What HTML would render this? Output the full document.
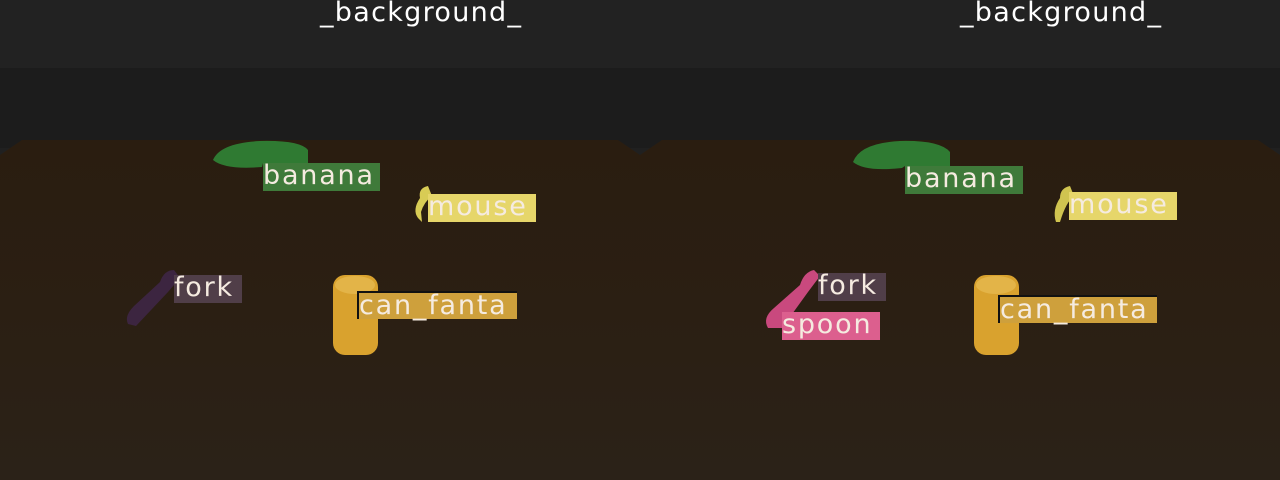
<!DOCTYPE html><html><head><style>
body{margin:0;width:1280px;height:480px;overflow:hidden;background:#202020;font-family:"DejaVu Sans","Liberation Sans",sans-serif}
.p{position:absolute;top:0;width:640px;height:480px;overflow:hidden}
.top{position:absolute;left:0;top:0;width:640px;height:68px;background:#222}
.mid{position:absolute;left:0;top:68px;width:640px;height:80px;background:#1c1c1c}
.floor{position:absolute;left:0;top:140px;width:640px;height:340px;background:linear-gradient(180deg,#2a1d10 0%,#2b1f13 50%,#2b2218 100%);clip-path:polygon(0 15px,22px 0,618px 0,640px 15px,640px 340px,0 340px)}
.h{position:absolute;top:-3px;color:#fff;font-size:27px;letter-spacing:1.3px}
.l{position:absolute;height:28px;color:#f5ebe0;font-size:27px;line-height:26px;letter-spacing:1.8px;box-sizing:border-box;white-space:nowrap}
</style></head><body>
<div class="p" style="left:0">
<div class="top"></div><div class="mid"></div><div class="floor"></div>
<div class="h" style="left:320px">_background_</div>
<svg style="position:absolute;left:0;top:0" width="640" height="480">
<path d="M213 160 Q220 143 260 141 Q300 140 308 150 L308 163 L263 163 L262 167 Q225 170 213 160Z" fill="#2f7a32"/>
<path d="M418 218 Q412 210 420 198 Q418 188 428 186 L432 196 Q424 202 421 212 L422 222Z" fill="#d8cc55"/>
<path d="M128 324 Q124 316 134 306 L160 282 Q164 270 174 270 L180 278 L168 292 L136 326Z" fill="#3c2540"/>
<rect x="333" y="275" width="45" height="80" rx="12" fill="#d9a22e"/>
<ellipse cx="355" cy="285" rx="20" ry="9" fill="#e3b448"/>
</svg>
<div class="l" style="left:263px;top:163px;width:117px;background:#3f7a3a">banana</div>
<div class="l" style="left:428px;top:194px;width:108px;background:#e6d66a">mouse</div>
<div class="l" style="left:174px;top:275px;width:68px;background:#503e48">fork</div>
<div class="l" style="left:357px;top:291px;width:160px;background:#cea03c;border-left:2px solid #111;border-top:2px solid #111">can_fanta</div>
</div>
<div class="p" style="left:640px">
<div class="top"></div><div class="mid"></div><div class="floor"></div>
<div class="h" style="left:320px">_background_</div>
<svg style="position:absolute;left:0;top:0" width="640" height="480">
<path d="M213 162 Q220 143 260 141 Q300 140 310 152 L310 166 L265 166 L262 168 Q225 172 213 162Z" fill="#2f7a32"/>
<path d="M416 222 Q412 210 420 198 Q420 188 430 186 L434 196 Q426 202 420 222Z" fill="#d0c450"/>
<path d="M128 328 Q122 318 134 308 L160 285 Q164 272 174 270 L180 276 L168 292 L142 328Z" fill="#c9497e"/>
<rect x="334" y="275" width="45" height="80" rx="12" fill="#d9a22e"/>
<ellipse cx="356" cy="285" rx="20" ry="9" fill="#e3b448"/>
</svg>
<div class="l" style="left:265px;top:166px;width:118px;background:#3f7a3a">banana</div>
<div class="l" style="left:429px;top:192px;width:108px;background:#e6d66a">mouse</div>
<div class="l" style="left:178px;top:273px;width:68px;background:#503e48">fork</div>
<div class="l" style="left:142px;top:312px;width:98px;background:#dc5f8e">spoon</div>
<div class="l" style="left:358px;top:295px;width:159px;background:#cea03c;border-left:2px solid #111;border-top:2px solid #111">can_fanta</div>
</div>
</body></html>
